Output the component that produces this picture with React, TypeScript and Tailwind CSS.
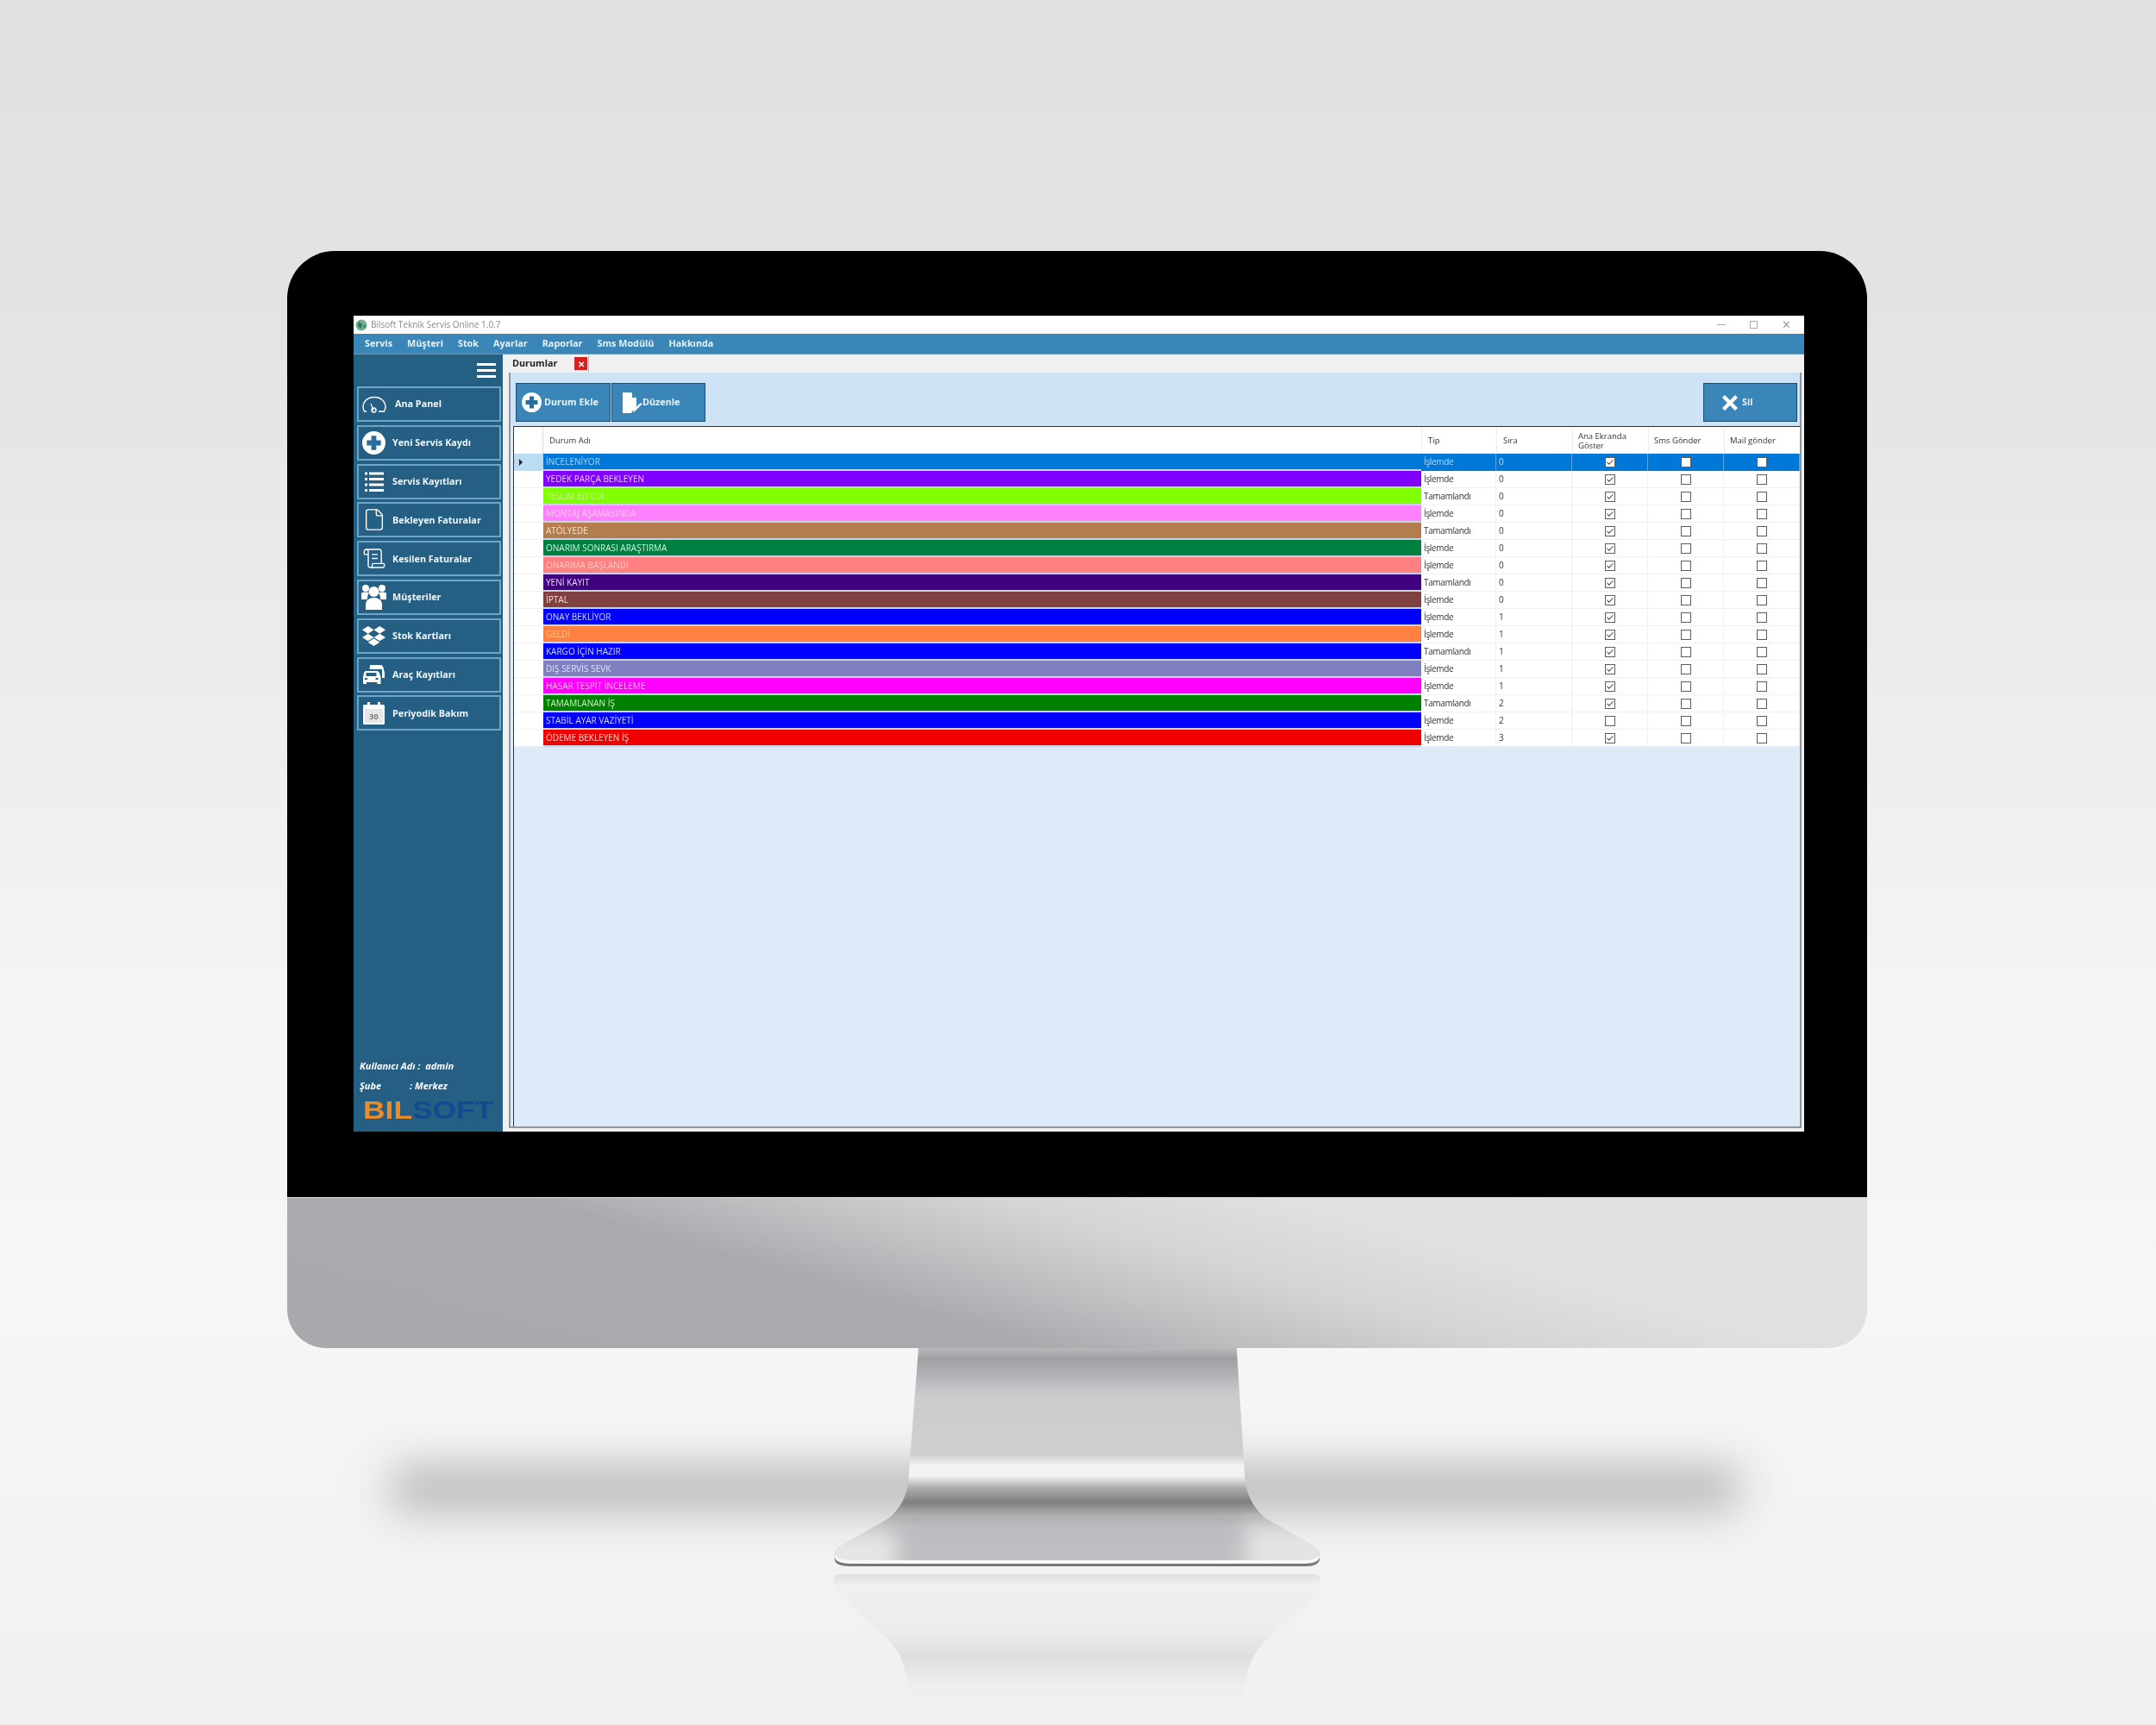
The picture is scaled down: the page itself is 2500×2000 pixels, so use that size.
import React from 'react';
import { File, ScrollText, Check } from 'lucide-react';
import { FaDropbox } from 'react-icons/fa';

const GaugeIcon = () => (
  <svg viewBox="0 0 28 20" className="h-[20px] w-[28px] text-white" fill="none" stroke="currentColor" strokeWidth="1.4">
    <path d="M5 18H2.500C1.500 16 1 14.500 1 13C1 6.500 6.500 1.500 14 1.500S27 6.500 27 13C27 14.500 26.500 16 25.500 18H19" />
    <path d="M10 9L13 17" strokeWidth="1.2" />
    <circle cx="13.500" cy="16.500" r="2.500" />
  </svg>
);

const PlusCircle = ({ size }: { size: string }) => (
  <svg viewBox="0 0 28 28" className={size}>
    <circle cx="14" cy="14" r="14" fill="#fff" />
    <path d="M11 5.500h6V11h5.500v6H17v5.500h-6V17H5.500v-6H11z" fill="#2b6e9e" />
  </svg>
);

const ListIcon = () => (
  <svg viewBox="0 0 22 23" className="h-[23px] w-[22px]" fill="#fff">
    <rect x="0" y="0.500" width="3" height="3" />
    <rect x="5" y="0.500" width="17" height="3" />
    <rect x="0" y="7" width="3" height="3" />
    <rect x="5" y="7" width="17" height="3" />
    <rect x="0" y="13.500" width="3" height="3" />
    <rect x="5" y="13.500" width="17" height="3" />
    <rect x="0" y="20" width="3" height="3" />
    <rect x="5" y="20" width="17" height="3" />
  </svg>
);

const PeopleIcon = () => (
  <svg viewBox="0 0 29 30" className="h-[30px] w-[29px]" fill="#fff">
    <circle cx="5" cy="5" r="4" />
    <circle cx="24" cy="5" r="4" />
    <path d="M0 11c0-1 2-1.500 5-1.500 1.500 0 3 .3 4 .8C7.500 12 7 15 7 18H0z" />
    <path d="M29 11c0-1-2-1.500-5-1.500-1.500 0-3 .3-4 .8 1.500 1.700 2 4.700 2 7.700h7z" />
    <circle cx="14.500" cy="9" r="6" />
    <path d="M5 24c0-5 4-8 9.500-8S24 19 24 24v6H5z" />
  </svg>
);

const CarsIcon = () => (
  <svg viewBox="0 0 25 22" className="h-[22px] w-[25px]" fill="#fff">
    <path d="M8 0h12c2 0 3 1 3.500 3L25 9v6h-3V5H7.500L8 1z" />
    <path d="M3 7h13c1.500 0 2.500 1 3 2.500l1.500 4.500V22h-4v-2H4v2H0v-8l1-4.500C1.500 8 2 7 3 7z" />
    <rect x="3.500" y="9" width="12" height="4" fill="#255f83" />
    <rect x="2" y="15" width="3" height="2" fill="#255f83" />
    <rect x="14.500" y="15" width="3" height="2" fill="#255f83" />
  </svg>
);

const CalendarIcon = () => (
  <svg viewBox="0 0 25 26" className="h-[26px] w-[25px]">
    <rect x="0" y="3" width="25" height="23" rx="1.500" fill="#fff" />
    <rect x="5" y="0" width="3" height="5" fill="#fff" />
    <rect x="17" y="0" width="3" height="5" fill="#fff" />
    <rect x="2" y="8" width="21" height="16" fill="#e6e6e6" />
    <text x="12.500" y="20" textAnchor="middle" fontSize="9" fill="#777">30</text>
  </svg>
);

const EditFile = () => (
  <svg viewBox="0 0 24 26" className="h-[26px] w-[24px]">
    <path d="M1 1h10l6 6v10l-5 6-1 2H1z" fill="#fff" />
    <path d="M12 1v6h5z" fill="#3a86b8" />
    <path d="M13 24l1-4 8-7 1.500 1.500-8 8z" fill="#fff" />
  </svg>
);

const menuItems = ['Servis', 'Müşteri', 'Stok', 'Ayarlar', 'Raporlar', 'Sms Modülü', 'Hakkında'];

const sideItems = [
  { label: 'Ana Panel', icon: <GaugeIcon />, gap: 'ml-[10px]' },
  { label: 'Yeni Servis Kaydı', icon: <PlusCircle size="h-[27px] w-[27px]" />, gap: 'ml-[7px]' },
  { label: 'Servis Kayıtları', icon: <ListIcon />, gap: 'ml-[7px]' },
  { label: 'Bekleyen Faturalar', icon: <File className="h-[31px] w-[28px] text-white" strokeWidth={1.2} />, gap: 'ml-[7px]' },
  { label: 'Kesilen Faturalar', icon: <ScrollText className="h-[31px] w-[28px] text-white" strokeWidth={1.2} />, gap: 'ml-[7px]' },
  { label: 'Müşteriler', icon: <PeopleIcon />, gap: 'ml-[7px]' },
  { label: 'Stok Kartları', icon: <FaDropbox className="h-[27px] w-[27px] text-white" />, gap: 'ml-[7px]' },
  { label: 'Araç Kayıtları', icon: <CarsIcon />, gap: 'ml-[7px]' },
  { label: 'Periyodik Bakım', icon: <CalendarIcon />, gap: 'ml-[7px]' },
];

const rows = [
  { name: 'İNCELENİYOR', cls: 'bg-[#0078d7] text-[#a6d6fb]', tip: 'İşlemde', sira: 0, ana: true },
  { name: 'YEDEK PARÇA BEKLEYEN', cls: 'bg-[#8000ff] text-[#e6c8ff]', tip: 'İşlemde', sira: 0, ana: true },
  { name: 'TESLİM EDİLDİ', cls: 'bg-[#80ff00] text-[#ccf596]', tip: 'Tamamlandı', sira: 0, ana: true },
  { name: 'MONTAJ AŞAMASINDA', cls: 'bg-[#ff80ff] text-[#ffc4f4]', tip: 'İşlemde', sira: 0, ana: true },
  { name: 'ATÖLYEDE', cls: 'bg-[#b37d4d] text-[#f6e2c8]', tip: 'Tamamlandı', sira: 0, ana: true },
  { name: 'ONARIM SONRASI ARAŞTIRMA', cls: 'bg-[#008040] text-[#c8f0dc]', tip: 'İşlemde', sira: 0, ana: true },
  { name: 'ONARIMA BAŞLANDI', cls: 'bg-[#ff8080] text-[#ffc8c0]', tip: 'İşlemde', sira: 0, ana: true },
  { name: 'YENİ KAYIT', cls: 'bg-[#400080] text-[#e8d8f8]', tip: 'Tamamlandı', sira: 0, ana: true },
  { name: 'İPTAL', cls: 'bg-[#804040] text-[#f8dcd0]', tip: 'İşlemde', sira: 0, ana: true },
  { name: 'ONAY BEKLİYOR', cls: 'bg-[#0000ff] text-[#d0d8ff]', tip: 'İşlemde', sira: 1, ana: true },
  { name: 'GELDİ', cls: 'bg-[#ff8040] text-[#ffc890]', tip: 'İşlemde', sira: 1, ana: true },
  { name: 'KARGO İÇİN HAZIR', cls: 'bg-[#0000ff] text-[#d0d8ff]', tip: 'Tamamlandı', sira: 1, ana: true },
  { name: 'DIŞ SERVİS SEVK', cls: 'bg-[#8080c0] text-[#e0e0f4]', tip: 'İşlemde', sira: 1, ana: true },
  { name: 'HASAR TESPİT İNCELEME', cls: 'bg-[#ff00ff] text-[#ffb8e8]', tip: 'İşlemde', sira: 1, ana: true },
  { name: 'TAMAMLANAN İŞ', cls: 'bg-[#008000] text-[#c8f0c0]', tip: 'Tamamlandı', sira: 2, ana: true },
  { name: 'STABİL AYAR VAZİYETİ', cls: 'bg-[#0000ff] text-[#d0d8ff]', tip: 'İşlemde', sira: 2, ana: false },
  { name: 'ÖDEME BEKLEYEN İŞ', cls: 'bg-[#f00000] text-[#ffd0c8]', tip: 'İşlemde', sira: 3, ana: true },
];

const GRID_COLS = 'grid grid-cols-[34px_1018px_87px_88px_88px_88px_88px]';

const CheckCell = ({ on, selected }: { on: boolean; selected: boolean }) => (
  <div className={`flex items-center justify-center border-r ${selected ? 'border-[#5aa5e4] bg-[#0078d7]' : 'border-b border-[#edf0f4] bg-white'}`}>
    <div className="flex h-[12px] w-[12px] items-center justify-center border border-[#5c5c5c] bg-white">
      {on && <Check className="h-[10px] w-[10px] text-[#444]" strokeWidth={2.5} />}
    </div>
  </div>
);

const DataRow = ({ row, selected }: { row: (typeof rows)[number]; selected: boolean }) => {
  const text = selected ? 'bg-[#0078d7] text-[#b6dcf8] border-[#5aa5e4]' : 'bg-white text-[#333] border-b border-[#edf0f4]';
  return (
    <div className={`${GRID_COLS} h-[20px] text-[10px] leading-[19px]`}>
      <div className={`flex items-center pl-[6px] ${selected ? 'bg-[#bcdcf4]' : 'border-b border-[#edf0f4] bg-white'}`}>
        {selected && <div className="h-0 w-0 border-y-[4px] border-l-[4px] border-y-transparent border-l-[#222]" />}
      </div>
      <div className={`${row.cls} truncate border-b-2 border-[#c9d2e2] pl-[3px]`}>{row.name}</div>
      <div className={`${text} border-r pl-[3px] tracking-[-0.35px]`}>{row.tip}</div>
      <div className={`${text} border-r pl-[3px]`}>{row.sira}</div>
      <CheckCell on={row.ana} selected={selected} />
      <CheckCell on={false} selected={selected} />
      <CheckCell on={false} selected={selected} />
    </div>
  );
};

const ToolButton = ({ icon, label, className }: { icon: React.ReactNode; label: string; className: string }) => (
  <button className={`flex h-[45px] items-center border border-[#1c4d70] bg-[#3a86b8] text-[10.800px] font-bold text-[#e8f3fa] ${className}`}>
    {icon}
    <span>{label}</span>
  </button>
);

const Sidebar = () => (
  <aside className="flex w-[173px] flex-col bg-[#255f83]">
    <div className="flex h-[37px] items-center justify-end pr-[8px] pb-[1px]">
      <div className="flex w-[22px] flex-col gap-[4px]">
        <div className="h-[3px] bg-white" />
        <div className="h-[3px] bg-white" />
        <div className="h-[3px] bg-white" />
      </div>
    </div>
    <div className="flex flex-col gap-[3.800px] pl-[4px] pr-[2px]">
      {sideItems.map((item) => (
        <div key={item.label} className="flex h-[41px] items-center border-2 border-[#6ea6ca] bg-[#255f83] pl-[3px] text-[10.800px] font-bold text-[#eef6fb]">
          <div className="flex w-[29px] justify-center">{item.icon}</div>
          <span className={item.gap}>{item.label}</span>
        </div>
      ))}
    </div>
    <div className="mt-auto pb-[14px] pl-[7px] text-[11px] font-bold italic text-white">
      <div className="mb-[8px] h-[15px] whitespace-pre leading-[15px]">Kullanıcı Adı :  admin</div>
      <div className="flex h-[15px] leading-[15px]">
        <span className="w-[58px]">Şube</span>
        <span>: Merkez</span>
      </div>
      <div className="ml-[4px] mt-[10px] flex h-[22px] origin-left scale-x-[1.22] items-center text-[29px] not-italic leading-[22px] font-['Liberation_Sans',sans-serif]">
        <span className="font-bold text-[#ef8a24]">BIL</span>
        <span className="font-bold text-[#134a90]">SOFT</span>
      </div>
    </div>
  </aside>
);

const StatusGrid = () => (
  <div className="ml-[3px] flex-1 border-l border-t border-[#333] bg-[#deeaf7]">
    <div className={`${GRID_COLS} h-[31px] bg-white text-[9.500px] leading-[11px] text-[#333]`}>
      <div className="border-r border-[#d8d8d8]" />
      <div className="flex items-center pl-[7px]">Durum Adı</div>
      <div className="flex items-center border-l border-[#eeeeee] pl-[7px]">Tip</div>
      <div className="flex items-center border-l border-[#eeeeee] pl-[7px]">Sıra</div>
      <div className="flex items-center border-l border-[#eeeeee] pl-[6px]">Ana Ekranda<br />Göster</div>
      <div className="flex items-center border-l border-[#eeeeee] pl-[6px]">Sms Gönder</div>
      <div className="flex items-center border-l border-[#eeeeee] pl-[6px]">Mail gönder</div>
    </div>
    {rows.map((row, i) => (
      <DataRow key={row.name} row={row} selected={i === 0} />
    ))}
  </div>
);

const AppWindow = () => (
  <div className="flex h-[946px] w-[1682px] flex-col overflow-hidden bg-white font-['Open_Sans',sans-serif] blur-[0.4px]">
    <div className="flex h-[21px] items-center bg-white pl-[2px] text-[10px] text-[#8a8a8a]">
      <svg viewBox="0 0 14 14" className="mr-[4px] h-[14px] w-[14px]">
        <circle cx="7" cy="7" r="6.500" fill="#6fae8f" />
        <path d="M4 3l4 3-2 5-3-3zM9 8l3-1-1 4z" fill="#2f6f55" />
      </svg>
      <span>Bilsoft Teknik Servis Online 1.0.7</span>
      <div className="ml-auto flex items-center gap-[28px] pr-[15px] text-[#9a9a9a]">
        <div className="h-px w-[10px] bg-[#aaa]" />
        <div className="h-[9px] w-[9px] border border-[#aaa]" />
        <span className="text-[13px] leading-none">✕</span>
      </div>
    </div>
    <div className="flex h-[24px] items-center gap-[17px] border-b border-[#6c98b4] bg-[#3a86b8] pl-[13px] text-[10.800px] font-bold text-[#e4f1f9]">
      {menuItems.map((m) => (
        <span key={m}>{m}</span>
      ))}
    </div>
    <div className="flex min-h-0 flex-1">
      <Sidebar />
      <div className="flex flex-1 flex-col bg-[#f0f0f0]">
        <div className="flex h-[21px] items-center pl-[11px]">
          <span className="w-[72px] text-[10.800px] font-bold text-[#222]">Durumlar</span>
          <div className="flex h-[15px] w-[15px] items-center justify-center bg-[#d42020] text-[10px] font-bold leading-none text-white">✕</div>
          <div className="ml-[1px] h-[20px] w-px bg-[#bbb]" />
        </div>
        <div className="mb-[4px] ml-[7px] mr-[3px] flex flex-1 flex-col border-b-2 border-l-2 border-r-2 border-[#8f979e] bg-[#deeaf7]">
          <div className="flex h-[62px] items-start justify-between bg-[#cfe3f6] pl-[6px] pr-[3px] pt-[12px]">
            <div className="flex">
              <ToolButton className="w-[110px] pl-[6px]" icon={<PlusCircle size="mr-[3px] h-[23px] w-[23px]" />} label="Durum Ekle" />
              <ToolButton className="ml-[1px] w-[109px] pl-[11px]" icon={<EditFile />} label="Düzenle" />
            </div>
            <ToolButton
              className="w-[109px] justify-start pl-[21px]"
              icon={
                <svg viewBox="0 0 18 18" className="mr-[5px] h-[18px] w-[18px]">
                  <path d="M3 0l6 6 6-6 3 3-6 6 6 6-3 3-6-6-6 6-3-3 6-6-6-6z" fill="#fff" />
                </svg>
              }
              label="Sil"
            />
          </div>
          <StatusGrid />
        </div>
      </div>
    </div>
  </div>
);

const STAND_PATH = 'M116 0H485L495 158C500 178 508 188 518 197L575 230C584 236 584 248 576 248H24C16 248 16 236 25 230L82 197C92 188 100 178 104 158Z';

const Stand = () => (
  <svg viewBox="0 0 600 437" className="ml-[949px] h-[437px] w-[600px]">
    <defs>
      <linearGradient id="neck" x1="0" y1="0" x2="0" y2="1">
        <stop offset="0" stopColor="#b8b8bb" />
        <stop offset="0.05" stopColor="#a0a0a4" />
        <stop offset="0.22" stopColor="#cbcbce" />
        <stop offset="0.5" stopColor="#cfcfd2" />
        <stop offset="0.55" stopColor="#f4f4f6" />
        <stop offset="0.6" stopColor="#f0f0f2" />
        <stop offset="0.65" stopColor="#b0b0b2" />
        <stop offset="0.72" stopColor="#7f7f7f" />
        <stop offset="0.78" stopColor="#aeaeb0" />
        <stop offset="0.84" stopColor="#bcbcc0" />
        <stop offset="1" stopColor="#c0c0c4" />
      </linearGradient>
      <linearGradient id="reflect" x1="0" y1="0" x2="0" y2="1">
        <stop offset="0" stopColor="#dedede" />
        <stop offset="0.07" stopColor="#f0f0f0" />
        <stop offset="0.38" stopColor="#ececec" />
        <stop offset="0.55" stopColor="#dedede" />
        <stop offset="0.75" stopColor="#efefef" />
        <stop offset="1" stopColor="#f1f1f1" />
      </linearGradient>
      <clipPath id="standClip">
        <path d={STAND_PATH} />
      </clipPath>
      <filter id="soft" x="-30%" y="-30%" width="160%" height="160%">
        <feGaussianBlur stdDeviation="12" />
      </filter>
    </defs>
    <path d={STAND_PATH} fill="url(#neck)" />
    <g clipPath="url(#standClip)">
      <rect x="-20" y="212" width="110" height="60" fill="#e6e6e6" filter="url(#soft)" />
      <rect x="495" y="205" width="130" height="70" fill="#e4e4e4" filter="url(#soft)" />
    </g>
    <path d="M19 240C22 245 30 246 40 246H560C570 246 578 245 581 240V243C580 248 570 249 560 249H40C30 249 20 248 19 243Z" fill="#fafafa" />
    <path d="M19 243C21 249 30 250 40 250H560C570 250 579 249 581 243V246C579 252 572 253 560 253H40C28 253 21 252 19 246Z" fill="#777" />
    <path d="M24 262H576C584 264 584 274 580 282L518 340C504 354 496 370 494 400V437H104V400C102 370 96 354 82 340L20 282C16 274 16 264 24 262Z" fill="url(#reflect)" />
  </svg>
);

const App = () => (
  <div className="relative h-[2000px] w-[2500px] overflow-hidden bg-[linear-gradient(180deg,#e0e0e0_0%,#e4e4e4_20%,#f5f5f6_60%,#f6f6f7_76%,#f0f0f0_100%)]">
    <div className="absolute left-[455px] top-[1702px] h-[48px] w-[1560px] bg-[#b4b4b4] blur-[25px]" />
    <div className="relative pt-[291px]">
      <div className="ml-[333px] w-[1832px]">
        <div className="h-[1097px] rounded-t-[55px] bg-black pl-[77px] pt-[75px]">
          <AppWindow />
        </div>
        <div className="h-[175px] rounded-b-[45px] border-t border-[#e6e6e6] bg-[linear-gradient(16deg,#a9a9ad_0%,#aaaaae_36%,#c2c2c5_48%,#d4d4d7_58%,#e0e0e0_72%,#e1e1e1_100%)]" />
      </div>
      <Stand />
    </div>
  </div>
);

export default App;
